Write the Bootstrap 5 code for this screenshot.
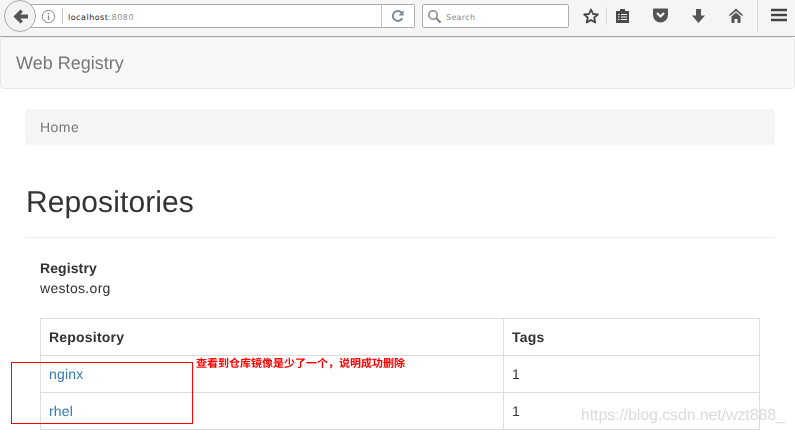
<!DOCTYPE html>
<html lang="en">
<head>
<meta charset="utf-8">
<title>Web Registry</title>
<link href="https://cdn.jsdelivr.net/npm/bootstrap@5.3.0/dist/css/bootstrap.min.css" rel="stylesheet">
<style>
html,body{height:434px;overflow:hidden}
body{font-family:"Liberation Sans",Arial,sans-serif;font-size:14px;line-height:20px;color:#333;background:#fff;position:relative;text-rendering:geometricPrecision}
.chrome{height:37px;background:#f5f5f5;border-bottom:1px solid #a8a8a8;position:relative}
.back-ring{position:absolute;left:4px;top:0;width:32px;height:32px;border-radius:50%;background:#f3f3f3;border:1px solid #a9a9a9;display:flex;align-items:center;justify-content:center}
.url-box{position:absolute;left:30px;top:4px;width:385px;height:24px;background:#fff;border:1px solid #adadad;border-left:0;border-radius:0 2px 2px 0;display:flex;align-items:center}
.info-ic{margin-left:11px;width:15px;height:15px}
.url-sep{width:1px;height:16px;background:#c4c4c4;margin:0 5px 0 6px}
.url-text{font-family:"DejaVu Sans",sans-serif;font-size:8px;color:#222;letter-spacing:.5px;padding-top:3px}
.url-text span{color:#8c8c8c}
.reload{margin-left:auto;width:33px;height:22px;border-left:1px solid #c4c4c4;display:flex;align-items:center;justify-content:center}
.search-box{position:absolute;left:422px;top:4px;width:147px;height:24px;background:#fff;border:1px solid #adadad;border-radius:2px;display:flex;align-items:center;padding-left:4px;gap:4px;font-family:"DejaVu Sans",sans-serif;font-size:8px;color:#8d8d8d;letter-spacing:.3px}
.search-box span{padding-top:3px}
.tool{position:absolute;top:6px}
.tsep{position:absolute;width:1px;background:#d8d8d8}
.brandbar{height:52px;background:#f8f8f8;border:1px solid #e7e7e7;border-radius:4px;display:flex;align-items:center;padding-left:15px;will-change:transform}
.brandname{font-size:18px;color:#777;line-height:20px}
.page-wrap{padding:0 20px 0 25px;margin-top:20px;will-change:transform}
.crumb{height:36px;background:#f5f5f5;border-radius:4px;padding:8px 15px;color:#777;letter-spacing:.45px}
.page-title{font-size:30px;line-height:36px;font-weight:400;color:#333;margin:40px 0 16px 1px;letter-spacing:.1px}
.title-rule{border-top:1px solid #eee;margin-bottom:20px}
.registry{padding:0 15px}
.reg-label{font-weight:700;font-size:14px;line-height:20px;letter-spacing:.1px}
.reg-val{line-height:20px;letter-spacing:.3px;margin-bottom:20px}
.repo-table{width:100%;table-layout:fixed;border-collapse:collapse;border:1px solid #ddd;margin:0}
.repo-table th,.repo-table td{border:1px solid #ddd;padding:8px;height:37px;line-height:20px;font-size:14px;color:#333;letter-spacing:.2px}
.repo-table th{font-weight:700}
.repo-table .c1{width:463px}
.repo-table a{color:#337ab7;text-decoration:none}
.mark-box{position:absolute;left:11px;top:362px;width:182px;height:62px;border:1px solid #f00}
.mark-note{position:absolute;left:196px;top:356px;font-family:"Noto Sans CJK SC",sans-serif;font-size:11px;line-height:14px;color:#f00;font-weight:700;white-space:nowrap}
.wm{position:absolute;left:581px;top:406px;font-size:16px;line-height:20px;color:rgba(170,170,170,.42);white-space:nowrap;letter-spacing:-.12px}
</style>
</head>
<body>
<div class="chrome">
  <div class="url-box">
    <svg class="info-ic" viewBox="0 0 15 15"><circle cx="7.500" cy="7.500" r="6.200" fill="none" stroke="#8a8a8a"/><rect x="6.900" y="6.500" width="1.300" height="4.500" fill="#8a8a8a"/><rect x="6.900" y="4" width="1.300" height="1.400" fill="#8a8a8a"/></svg>
    <div class="url-sep"></div>
    <div class="url-text">localhost<span>:8080</span></div>
    <div class="reload"><svg width="14" height="14" viewBox="0 0 14 14"><path d="M11.300 9.200A5 5 0 1 1 10.600 3.600" fill="none" stroke="#7f8a93" stroke-width="2"/><path d="M12.600 1.200V6.600H7.400z" fill="#7f8a93"/></svg></div>
  </div>
  <div class="back-ring"><svg width="17" height="17" viewBox="0 0 18 18"><path d="M9 1.500 1.500 9 9 16.500l2.600-2.600L8.800 11.200H17V6.800H8.800l2.800-2.700z" fill="#555"/></svg></div>
  <div class="search-box"><svg width="15" height="15" viewBox="0 0 15 15"><circle cx="6" cy="6" r="4.200" fill="none" stroke="#8a8a8a" stroke-width="1.600"/><path d="M9 9l4.600 4.600" stroke="#8a8a8a" stroke-width="2.200"/></svg><span>Search</span></div>
  <svg class="tool" style="left:583px;top:8px" width="16" height="16" viewBox="0 0 16 16"><path d="M8 1.500 10 6l4.800.5-3.600 3.200 1 4.800L8 12l-4.200 2.500 1-4.800L1.200 6.500 6 6z" fill="none" stroke="#444" stroke-width="1.800" stroke-linejoin="round"/></svg>
  <div class="tsep" style="left:606px;top:7px;height:18px"></div>
  <svg class="tool" style="left:615px;top:8px" width="15" height="16" viewBox="0 0 15 16"><path d="M1 3h13v12H1z" fill="#4a4a4a"/><rect x="5" y="1" width="5" height="3" fill="#4a4a4a"/><path d="M3 6.500h1.500M3 9h1.500M3 11.500h1.500M6 6.500h6M6 9h6M6 11.500h6" stroke="#f5f5f5" stroke-width="1.200"/></svg>
  <svg class="tool" style="left:652px;top:8px" width="17" height="15" viewBox="0 0 17 15"><path d="M1 1.500Q1 .5 2 .5h13q1 0 1 1V7a7.500 7.500 0 0 1-15 0z" fill="#555"/><path d="M5 5l3.500 3.500L12 5" fill="none" stroke="#f5f5f5" stroke-width="2.200"/></svg>
  <svg class="tool" style="left:691px;top:8px" width="15" height="16" viewBox="0 0 15 16"><path d="M5 1h5v6.500h4L7.500 15 1 7.500h4z" fill="#555"/></svg>
  <svg class="tool" style="left:728px;top:8px" width="16" height="15" viewBox="0 0 16 15"><path d="M8 .5.500 7.500h2.200L8 3l5.300 4.500h2.200z" fill="#555"/><path d="M3.500 8.500 8 4.500l4.500 4V15H9.500v-4h-3v4h-3z" fill="#555"/></svg>
  <div class="tsep" style="left:757px;top:0;height:33px"></div>
  <svg class="tool" style="left:771px;top:8px" width="16" height="14" viewBox="0 0 16 14"><path d="M0 2h16M0 7h16M0 12h16" stroke="#444" stroke-width="2.400"/></svg>
</div>
<nav class="brandbar"><span class="brandname">Web Registry</span></nav>
<main class="page-wrap">
  <div class="crumb">Home</div>
  <h1 class="page-title">Repositories</h1>
  <div class="title-rule"></div>
  <div class="registry">
    <div class="reg-label">Registry</div>
    <div class="reg-val">westos.org</div>
    <table class="repo-table">
      <thead><tr><th class="c1">Repository</th><th>Tags</th></tr></thead>
      <tbody>
        <tr><td><a href="#">nginx</a></td><td>1</td></tr>
        <tr><td><a href="#">rhel</a></td><td>1</td></tr>
      </tbody>
    </table>
  </div>
</main>
<div class="mark-box"></div>
<div class="mark-note">查看到仓库镜像是少了一个，说明成功删除</div>
<div class="wm">https://blog.csdn.net/wzt888_</div>
<script src="https://cdn.jsdelivr.net/npm/bootstrap@5.3.0/dist/js/bootstrap.bundle.min.js"></script>
</body>
</html>
